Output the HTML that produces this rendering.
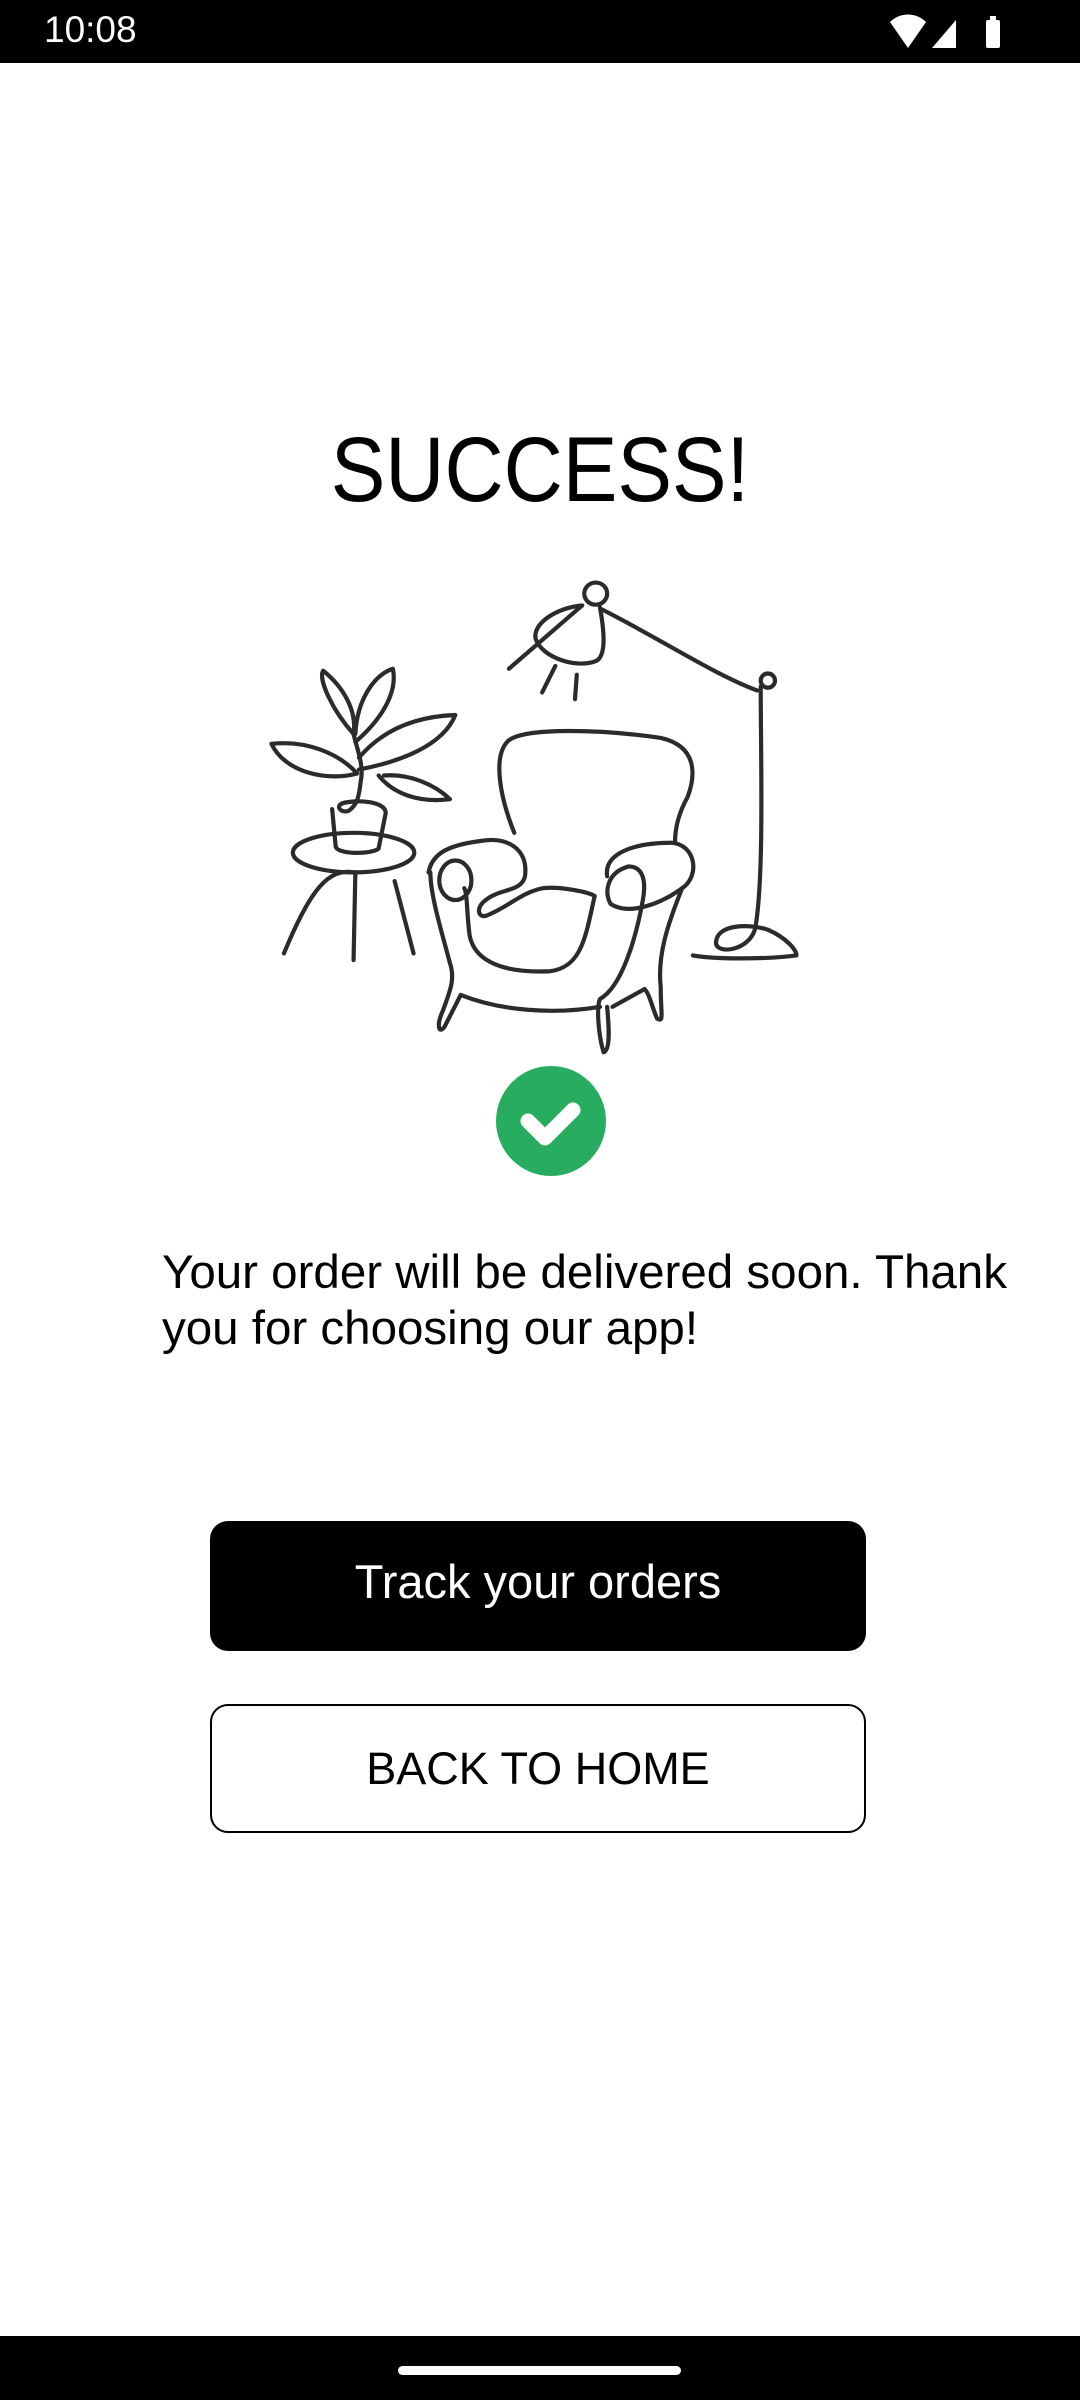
<!DOCTYPE html>
<html><head><meta charset="utf-8"><style>
html,body{margin:0;padding:0;width:1080px;height:2400px;background:#fff;overflow:hidden;position:relative;font-family:"Liberation Sans",sans-serif}
.sb{position:absolute;left:0;top:0;width:1080px;height:63px;background:#000;color:#fff}
.time{position:absolute;left:44px;top:9px;font-size:37px}
.nav{position:absolute;left:0;top:2336px;width:1080px;height:64px;background:#000}
.handle{position:absolute;left:398px;top:30px;width:283px;height:9px;border-radius:5px;background:#fff}
h1{position:absolute;left:0;width:1080px;top:420px;margin:0;text-align:center;font-weight:400;font-size:92px;line-height:100px;color:#000;transform:scaleX(0.89)}
p{position:absolute;left:162px;top:1245px;width:880px;margin:0;font-size:47.5px;line-height:56px;color:#000}
.b1{position:absolute;left:210px;top:1521px;width:656px;height:130px;background:#000;border-radius:18px;color:#fff;font-size:47px;text-align:center;line-height:122px}
.b2{position:absolute;left:210px;top:1704px;width:652px;height:125px;border:2px solid #000;border-radius:18px;color:#000;font-size:45px;text-align:center;line-height:125px}
path,ellipse{vector-effect:non-scaling-stroke}
</style></head><body>
<div class="sb"><div class="time">10:08</div>
<svg style="position:absolute;left:890px;top:14px" width="130" height="36" viewBox="0 0 130 36">
<path d="M0,8 C10,-2 26,-2 36,8 L18,34 Z" fill="#fff"/>
<path d="M42,34 L66,6 L66,34 Z" fill="#fff"/>
<rect x="96" y="6" width="14" height="28" rx="2" fill="#fff"/><rect x="100" y="2" width="6" height="5" fill="#fff"/>
</svg></div>
<h1>SUCCESS!</h1>
<svg style="position:absolute;left:250px;top:560px" width="560" height="620" viewBox="0 0 1568 1568" preserveAspectRatio="none">
<g fill="none" stroke="#2b2b2b" stroke-width="4.2" stroke-linecap="round" stroke-linejoin="round">
<path d="M290,440 C230,380 190,300 205,280 C260,320 300,380 290,440"/>
<path d="M295,440 C300,350 350,290 400,275 C415,340 360,410 295,460"/>
<path d="M300,540 C220,560 100,540 60,465 C160,455 250,490 300,540"/>
<path d="M305,500 C380,420 480,395 575,392 C540,470 420,510 305,530"/>
<path d="M375,545 C450,540 520,570 560,605 C470,615 400,590 360,545"/>
<path d="M290,440 C300,480 320,520 310,560 C305,600 300,620 275,635 C250,640 240,620 260,615"/>
<path d="M230,630 L240,725 C245,745 340,745 360,730 L380,640 C380,610 300,605 260,615"/>
<ellipse cx="290" cy="740" rx="170" ry="50"/>
<path d="M290,790 C220,780 170,830 95,995"/><path d="M295,790 L290,1012"/><path d="M405,812 L458,995"/>
<ellipse cx="968" cy="85" rx="32" ry="28"/>
<path d="M930,115 C860,120 790,160 800,200 C820,250 920,275 970,255 C1000,240 990,170 980,120"/>
<path d="M930,115 L725,275"/><path d="M855,268 L818,335"/><path d="M915,290 L910,352"/>
<path d="M985,125 C1150,200 1300,290 1420,330"/><ellipse cx="1450" cy="305" rx="20" ry="18"/>
<path d="M1430,320 C1430,500 1440,800 1415,930 C1400,990 1300,1000 1305,965 C1310,920 1400,920 1450,935 C1500,955 1530,985 1530,1000 C1450,1010 1300,1010 1240,1000"/>
<path d="M740,690 C700,600 680,500 720,460 C760,420 1000,430 1150,450 C1250,470 1250,540 1225,600 C1200,640 1190,680 1190,715"/>
<path d="M500,790 C510,740 560,720 650,710 C720,700 780,730 770,800 C760,840 700,830 660,860 C630,880 640,905 660,900 C720,880 760,840 820,830 C870,825 950,840 965,850"/>
<ellipse cx="575" cy="810" rx="45" ry="50"/>
<path d="M1000,800 C990,740 1080,715 1180,715 C1250,720 1260,800 1210,830 C1150,870 1060,900 1010,870 C990,840 1000,790 1060,775 C1100,775 1110,810 1100,860 C1080,960 1040,1080 980,1110 C970,1130 975,1200 990,1245 C1010,1240 1005,1180 1000,1130"/>
<path d="M965,850 C940,950 930,1030 840,1040 C720,1045 630,1020 615,950 C605,880 610,850 600,830"/>
<path d="M505,790 C505,850 540,950 560,1020 C575,1060 560,1090 540,1140 C520,1180 530,1200 545,1180 L590,1100 C700,1140 850,1150 980,1130"/>
<path d="M1210,830 C1170,920 1140,1000 1150,1080 C1150,1150 1160,1170 1140,1160 C1125,1130 1120,1100 1105,1085 L1015,1130"/>
</g>
</svg>
<svg style="position:absolute;left:496px;top:1066px" width="110" height="110" viewBox="0 0 110 110">
<circle cx="55" cy="55" r="55" fill="#28ad60"/>
<polyline points="32,55 49,72 77,44" fill="none" stroke="#fff" stroke-width="15" stroke-linecap="round" stroke-linejoin="round"/>
</svg>
<p>Your order will be delivered soon. Thank you for choosing our app!</p>
<div class="b1">Track your orders</div>
<div class="b2">BACK TO HOME</div>
<div class="nav"><div class="handle"></div></div>
</body></html>
